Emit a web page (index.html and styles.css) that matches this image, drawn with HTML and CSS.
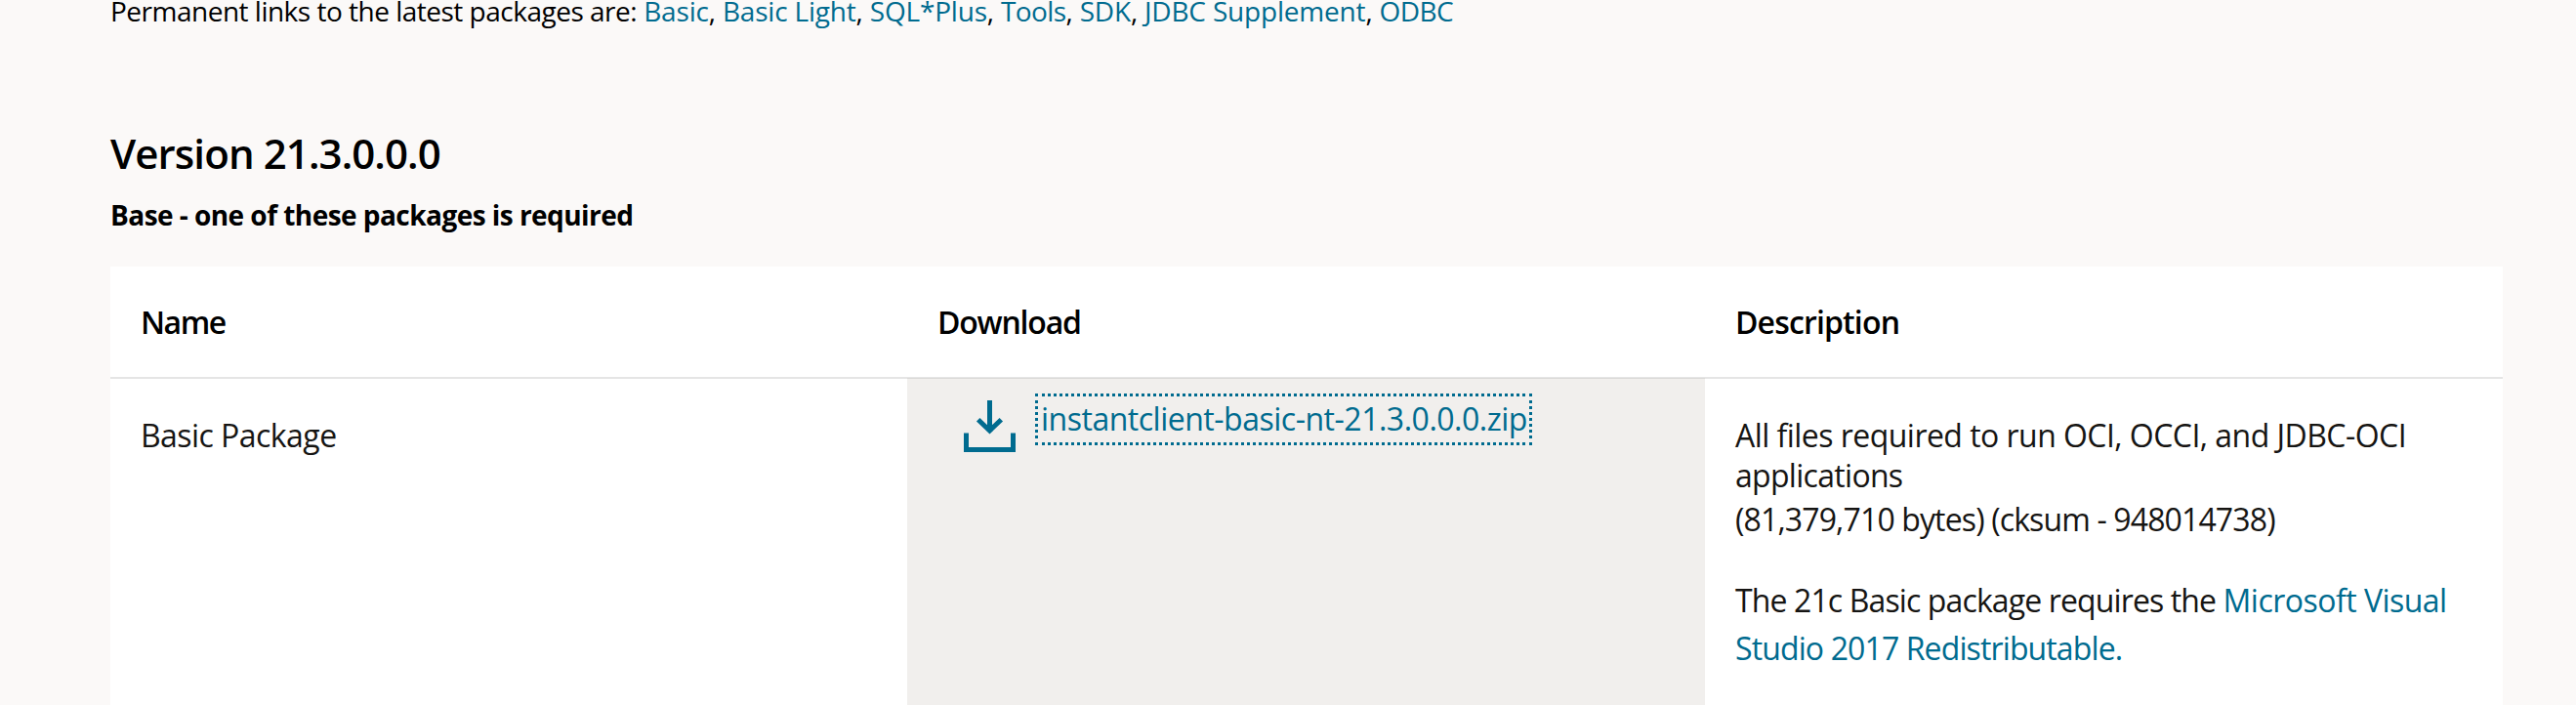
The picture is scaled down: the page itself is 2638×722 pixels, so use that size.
FILE: index.html
```html
<!DOCTYPE html>
<html lang="en">
<head>
<meta charset="utf-8">
<title>Instant Client Downloads</title>
<link rel="stylesheet" href="styles.css">
</head>
<body>
<main class="page">
  <p class="links"><span class="lead">Permanent links to the latest packages are:</span> <a href="#">Basic</a>, <a href="#">Basic Light</a>, <a href="#">SQL*Plus</a>, <a class="tight" href="#">Tools</a>, <a href="#">SDK</a>, <a href="#">JDBC Supplement</a>, <a class="tight" href="#">ODBC</a></p>
  <h2 class="version">Version 21.3.0.0.0</h2>
  <p class="base">Base - one of these packages is required</p>
  <section class="table">
    <div class="row head">
      <div class="cell name">Name</div>
      <div class="cell download">Download</div>
      <div class="cell description">Description</div>
    </div>
    <div class="row body">
      <div class="cell">Basic Package</div>
      <div class="cell file">
        <svg class="icon" width="53" height="53" viewBox="0 0 53 53" fill="none" stroke="currentColor" stroke-width="5">
          <path d="M26.5 0V31M14.7 19.7L26.5 31L38.3 19.7M2.5 33.5V50.5H50.5V33.5"/>
        </svg>
        <a class="zip" href="#">instantclient-basic-nt-21.3.0.0.0.zip</a>
      </div>
      <div class="cell info">
        <p class="summary">All files required to run OCI, OCCI, and JDBC-OCI <span class="narrow">applications</span></p>
        <p class="size">(81,379,710 bytes) (cksum - 948014738)</p>
        <p class="note">The 21c Basic package requires the <a href="#"><span class="vendor">Microsoft Visual</span> Studio 2017 Redistributable.</a></p>
      </div>
    </div>
  </section>
</main>
</body>
</html>
```
FILE: styles.css
```css
* { box-sizing: border-box; }
body {
  margin: 0;
  background: #fbf9f8;
  color: #000;
  font-family: "Open Sans", "Noto Sans", sans-serif;
}
p, h2 { margin: 0; }
a { color: #006b8f; text-decoration: none; }
.page { width: 2450px; height: 722px; margin-left: 113px; display: flex; flex-direction: column; }
.links { font-size: 28px; line-height: 22px; letter-spacing: -0.19px; white-space: nowrap; }
.lead { letter-spacing: -0.5px; }
.tight { letter-spacing: -0.6px; }
.version { margin-top: 110px; font-size: 42px; line-height: 50px; font-weight: 550; letter-spacing: -0.9px; }
.base { margin-top: 18px; font-size: 28px; line-height: 40px; font-weight: 700; letter-spacing: -0.54px; }
.table { margin-top: 33px; flex: 1; background: #fff; display: flex; flex-direction: column; }
.row { display: grid; grid-template-columns: 816px 817px 817px; }
.cell { padding: 0 31px; font-size: 32px; line-height: 42px; }
.head { height: 115px; padding-top: 36px; border-bottom: 2px solid #e5e5e5; font-weight: 570; }
.name { letter-spacing: -1.5px; }
.download { letter-spacing: -1.2px; }
.description { letter-spacing: -0.85px; }
.body { flex: 1; color: #161513; }
.body .cell { padding-top: 37px; letter-spacing: -0.55px; }
.body .file { display: flex; align-items: flex-start; padding: 15px 0 0 58px; background: #f1efed; box-shadow: 0 -1px #dad9d7; }
.icon { margin-top: 7px; color: #006b8f; flex: none; }
.zip {
  margin-left: 20px;
  width: 509px;
  height: 53px;
  padding-left: 3px;
  border: 3px dotted #006b8f;
  line-height: 46px;
  letter-spacing: -0.49px;
  white-space: nowrap;
}
.summary, .size { line-height: 41px; }
.summary { letter-spacing: -0.54px; }
.narrow { letter-spacing: -0.7px; }
.size { margin-top: 4px; letter-spacing: -0.87px; }
.note { margin-top: 38px; line-height: 49px; letter-spacing: -0.88px; }
.vendor { letter-spacing: -0.52px; }
```
